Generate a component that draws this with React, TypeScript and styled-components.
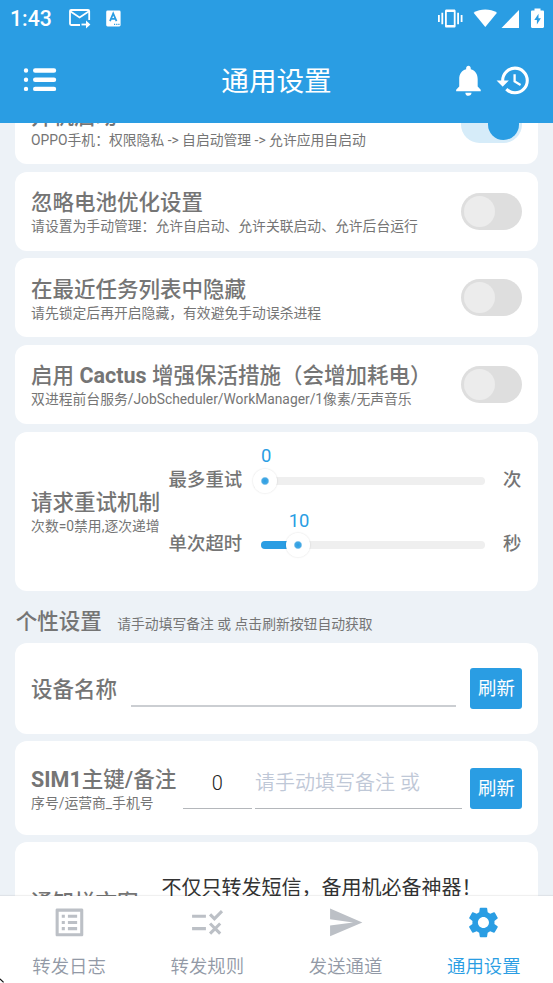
import React from "react";
import styled, { createGlobalStyle } from "styled-components";
import { MdHistory, MdListAlt, MdNotifications, MdRule, MdSend, MdSettings } from "react-icons/md";

const BLUE = "#2a9de3";

const GlobalStyle = createGlobalStyle`
  * { box-sizing: border-box; }
  html, body { margin: 0; padding: 0; }
  body {
    background: #edf2f7;
    font-family: Roboto, "Noto Sans CJK SC", sans-serif;
    color: #757575;
    overflow: hidden;
  }
`;

const Screen = styled.div`
  position: relative;
  display: flex;
  flex-direction: column;
  width: 553px;
  height: 983px;
  overflow: hidden;
  background: #edf2f7;
`;

const TopArea = styled.header`
  flex: none;
  height: 123px;
  background: ${BLUE};
  color: #fff;
`;

const StatusBar = styled.div`
  display: flex;
  align-items: center;
  height: 37px;
  padding: 0 9px 0 10px;
`;

const Clock = styled.span`
  width: 57.5px;
  font-size: 21.2px;
  font-weight: 500;
  line-height: 38px;
  padding-top: 1px;
`;

const NoticeIcons = styled.div`
  display: flex;
  align-items: center;
  gap: 15px;
`;

const StatusIcons = styled.div`
  display: flex;
  margin-left: auto;
`;

const TitleBar = styled.div`
  display: grid;
  grid-template-columns: 120px 1fr 120px;
  align-items: center;
  height: 86px;
`;

const MenuButton = styled.button`
  display: flex;
  padding: 0 0 0 23px;
  border: 0;
  background: none;
`;

const PageTitle = styled.h1`
  margin: 0;
  padding-top: 3px;
  text-align: center;
  font-size: 27.6px;
  font-weight: 370;
  line-height: 40px;
`;

const Actions = styled.div`
  display: flex;
  justify-content: flex-end;
  gap: 8px;
  padding-right: 21.3px;
  svg { display: block; }
`;

const Content = styled.main`
  flex: none;
  height: 773px;
  overflow: hidden;
  padding: 0 15.3px;
`;

const List = styled.div`
  display: flex;
  flex-direction: column;
  gap: 7.7px;
  margin-top: -37.7px;
`;

const Card = styled.section<{ $height: number }>`
  display: flex;
  align-items: center;
  flex: none;
  height: ${(p) => p.$height}px;
  padding: 0 15.3px;
  border-radius: 12px;
  background: #fff;
`;

const Texts = styled.div<{ $width?: number }>`
  flex: none;
  width: ${(p) => (p.$width ? `${p.$width}px` : "auto")};
  padding: 2px 0 0 0.5px;
  white-space: nowrap;
`;

const Title = styled.div`
  font-size: 21.5px;
  font-weight: 550;
  line-height: 29px;
`;

const Latin = styled.span`
  font-weight: 700;
`;

const Sub = styled.div`
  font-size: 13.82px;
  font-weight: 380;
  line-height: 19px;
`;

const Track = styled.div<{ $on?: boolean }>`
  display: flex;
  justify-content: ${(p) => (p.$on ? "flex-end" : "flex-start")};
  width: 61.4px;
  height: 37px;
  margin-left: auto;
  padding: 3px;
  border-radius: 19px;
  background: ${(p) => (p.$on ? "#d6ecf9" : "#dedede")};
`;

const Knob = styled.div<{ $on?: boolean }>`
  width: 31px;
  height: 31px;
  border-radius: 50%;
  background: ${(p) => (p.$on ? BLUE : "#ececec")};
`;

const Sliders = styled.div`
  flex: 1;
  margin-left: 9px;
`;

const SliderRow = styled.div`
  display: grid;
  grid-template-columns: 74px 223.5px 18.4px;
  column-gap: 18.5px;
  align-items: center;
  height: 64.5px;
  font-size: 18.4px;
  font-weight: 500;
  white-space: nowrap;
`;

const RowText = styled.span`
  padding-bottom: 3px;
`;

const Rail = styled.div`
  position: relative;
  height: 8px;
  margin-top: 3px;
  border-radius: 4px;
  background: #efefef;
`;

const Fill = styled.div`
  height: 8px;
  border-radius: 4px;
  background: ${BLUE};
`;

const Thumb = styled.div`
  position: absolute;
  top: 4px;
  width: 24px;
  height: 24px;
  margin: -12px 0 0 -12px;
  border-radius: 50%;
  background: radial-gradient(circle, ${BLUE} 0, #46a9e4 3px, #fff 4.4px);
  box-shadow: 0 0 2px rgba(0, 0, 0, 0.16);
`;

const Bubble = styled.span`
  position: absolute;
  top: -31.5px;
  width: 40px;
  margin-left: -19px;
  text-align: center;
  color: ${BLUE};
  font-size: 18.4px;
  font-weight: 400;
  line-height: 22px;
`;

const SectionHead = styled.div`
  display: flex;
  align-items: center;
  gap: 15.4px;
  height: 37px;
  padding: 9px 0 0 0.5px;
  ${Sub} { padding-top: 6px; }
`;

const Field = styled.div<{ $width: number; $left: number; $lift: number; $line: number; $hint?: boolean }>`
  flex: none;
  width: ${(p) => p.$width}px;
  height: 46px;
  margin-left: ${(p) => p.$left}px;
  margin-bottom: ${(p) => p.$lift}px;
  padding-left: 0.5px;
  border-bottom: ${(p) => p.$line}px solid ${(p) => (p.$line > 1 ? "#cbced2" : "#b4b7bb")};
  overflow: hidden;
  white-space: nowrap;
  font-size: 20px;
  font-weight: 350;
  line-height: 41px;
  color: ${(p) => (p.$hint ? "#bfc8d7" : "#222")};
  text-align: ${(p) => (p.$hint ? "left" : "center")};
`;

const Refresh = styled.button`
  flex: none;
  width: 52px;
  height: 41px;
  margin-left: auto;
  padding: 1px 0 0;
  border: 0;
  border-radius: 3px;
  background: ${BLUE};
  color: #fff;
  font: 400 18.4px/38px Roboto, "Noto Sans CJK SC", sans-serif;
`;

const Message = styled.div`
  align-self: flex-start;
  margin: 32px 0 0 23px;
  font-size: 20px;
  font-weight: 400;
  line-height: 28px;
  color: #333;
  white-space: nowrap;
`;

const Tabs = styled.nav`
  display: grid;
  grid-template-columns: repeat(4, 1fr);
  flex: none;
  height: 87px;
  background: #fff;
  box-shadow: 0 -1px 1px rgba(0, 0, 0, 0.06);
  z-index: 1;
`;

const Tab = styled.div<{ $active?: boolean }>`
  display: flex;
  flex-direction: column;
  align-items: center;
  padding-top: 8px;
  font-size: 18.4px;
  font-weight: 360;
  line-height: 24px;
  color: ${(p) => (p.$active ? BLUE : "#9299a6")};
  svg {
    display: block;
    margin-bottom: 14px;
    color: ${(p) => (p.$active ? BLUE : "#bcc0c6")};
  }
`;

const Cursor = styled.svg`
  position: absolute;
  left: 0;
  bottom: 0;
  z-index: 2;
`;

const ForwardMailIcon = () => (
  <svg width="23" height="22" viewBox="0 0 23 22" fill="none" stroke="#fff" strokeWidth="1.8">
    <path d="M12 17H3.200Q2 17 2 15.800V3.100Q2 2 3.200 2H20Q21.200 2 21.200 3.200V12" />
    <path d="m2.200 3.200 9.400 6.200 9.400-6.200" />
    <path d="M13.500 16.500h7" />
    <path d="M18 12.600l4.400 3.900-4.400 4z" fill="#fff" stroke="none" />
  </svg>
);

const LetterIcon = () => (
  <svg width="15" height="17" viewBox="0 0 15 17">
    <rect x=".2" y=".6" width="14.4" height="15.8" rx="1.4" fill="#fff" />
    <path d="m4 11.2 3.2-7.700 3.300 7.700M5.200 8.800h4" fill="none" stroke={BLUE} strokeWidth="1.8" />
    <path d="M8 14.300h1.200M10.200 14.300h1.200M12.300 14.300h1.200" stroke={BLUE} strokeWidth="1.2" />
  </svg>
);

const SystemIcons = () => (
  <svg width="107" height="22" viewBox="0 0 107 22" fill="#fff">
    <path d="M1 7h1.800v7H1zM4.400 4.700h1.800v11.600H4.400zM20.200 4.700H22v11.600h-1.800zM23.700 7h1.800v7h-1.800z" />
    <path
      fillRule="evenodd"
      d="M9.500 1.500h7.600c1 0 1.500.6 1.500 1.500v15.100c0 1-.5 1.500-1.500 1.500H9.500C8.500 19.600 8 19.100 8 18.100V3C8 2.100 8.500 1.500 9.500 1.500zm.3 2.600v13h7v-13z"
    />
    <path d="M36.600 4.700C43.500 .3 53 .3 60 4.700L48.300 19z" />
    <path d="M82 2V19.900H64.500z" />
    <path
      fillRule="evenodd"
      d="M97.500 .5h6v2h2.300c.7 0 1.200.5 1.200 1.200v15c0 .7-.5 1.200-1.200 1.200H95.200c-.7 0-1.200-.5-1.200-1.200v-15C94 3 94.500 2.500 95.200 2.500h2.300zm4 5.200-4.200 6.200h2.600v4.700l4-6.300h-2.400z"
    />
  </svg>
);

const MenuIcon = () => (
  <svg width="34" height="26" viewBox="0 0 34 26" stroke="#fff" strokeWidth="4.400" strokeLinecap="round">
    <path d="M12.200 3.500h18.800M12.200 12.700h18.800M12.200 21.900h18.800" />
    <path d="M3 3.500h.01M3 12.700h.01M3 21.900h.01" />
  </svg>
);

const Switch = ({ on }: { on?: boolean }) => (
  <Track $on={on}>
    <Knob $on={on} />
  </Track>
);

const Slider = ({ label, value, at, unit }: { label: string; value: number; at: number; unit: string }) => (
  <SliderRow>
    <RowText>{label}</RowText>
    <Rail>
      <Fill style={{ width: at > 4 ? at : 0 }} />
      <Thumb style={{ left: at }} />
      <Bubble style={{ left: at }}>{value}</Bubble>
    </Rail>
    <RowText>{unit}</RowText>
  </SliderRow>
);

const switches: { id: string; title: React.ReactNode; sub: string; on?: boolean }[] = [
  { id: "boot", title: "开机启动", sub: "OPPO手机：权限隐私 -> 自启动管理 -> 允许应用自启动", on: true },
  { id: "battery", title: "忽略电池优化设置", sub: "请设置为手动管理：允许自启动、允许关联启动、允许后台运行" },
  { id: "recents", title: "在最近任务列表中隐藏", sub: "请先锁定后再开启隐藏，有效避免手动误杀进程" },
  {
    id: "cactus",
    title: (
      <>
        启用 <Latin>Cactus</Latin> 增强保活措施（会增加耗电）
      </>
    ),
    sub: "双进程前台服务/JobScheduler/WorkManager/1像素/无声音乐",
  },
];

const tabs = [
  { label: "转发日志", Icon: MdListAlt },
  { label: "转发规则", Icon: MdRule },
  { label: "发送通道", Icon: MdSend },
  { label: "通用设置", Icon: MdSettings, active: true },
];

export default function App() {
  return (
    <Screen>
      <GlobalStyle />
      <TopArea>
        <StatusBar>
          <Clock>1:43</Clock>
          <NoticeIcons>
            <ForwardMailIcon />
            <LetterIcon />
          </NoticeIcons>
          <StatusIcons>
            <SystemIcons />
          </StatusIcons>
        </StatusBar>
        <TitleBar>
          <MenuButton aria-label="菜单">
            <MenuIcon />
          </MenuButton>
          <PageTitle>通用设置</PageTitle>
          <Actions>
            <MdNotifications size={36.9} />
            <MdHistory size={36.9} />
          </Actions>
        </TitleBar>
      </TopArea>
      <Content>
        <List>
          {switches.map((s) => (
            <Card $height={78.9} key={s.id}>
              <Texts>
                <Title>{s.title}</Title>
                <Sub>{s.sub}</Sub>
              </Texts>
              <Switch on={s.on} />
            </Card>
          ))}
          <Card $height={159.3}>
            <Texts $width={129}>
              <Title>请求重试机制</Title>
              <Sub>次数=0禁用,逐次递增</Sub>
            </Texts>
            <Sliders>
              <Slider label="最多重试" value={0} at={4} unit="次" />
              <Slider label="单次超时" value={10} at={37} unit="秒" />
            </Sliders>
          </Card>
          <SectionHead>
            <Title>个性设置</Title>
            <Sub>请手动填写备注 或 点击刷新按钮自动获取</Sub>
          </SectionHead>
          <Card $height={90.4}>
            <Texts $width={86}>
              <Title>设备名称</Title>
            </Texts>
            <Field $width={325} $left={14} $lift={8} $line={2} />
            <Refresh>刷新</Refresh>
          </Card>
          <Card $height={93.3}>
            <Texts $width={145}>
              <Title>
                <Latin>SIM1</Latin>主键/备注
              </Title>
              <Sub>序号/运营商_手机号</Sub>
            </Texts>
            <Field $width={69} $left={7} $lift={5} $line={1}>
              0
            </Field>
            <Field $width={207} $left={3} $lift={5} $line={1} $hint>
              请手动填写备注 或
            </Field>
            <Refresh>刷新</Refresh>
          </Card>
          <Card $height={118}>
            <Texts $width={108}>
              <Title>通知栏文案</Title>
            </Texts>
            <Message>不仅只转发短信，备用机必备神器！</Message>
          </Card>
        </List>
      </Content>
      <Tabs>
        {tabs.map(({ label, Icon, active }) => (
          <Tab key={label} $active={active}>
            <Icon size={36.9} />
            {label}
          </Tab>
        ))}
      </Tabs>
      <Cursor width="5" height="5" viewBox="0 0 5 5">
        <path d="M0 .8 3.600 4.400" stroke="#111" strokeWidth="1.2" />
      </Cursor>
    </Screen>
  );
}
